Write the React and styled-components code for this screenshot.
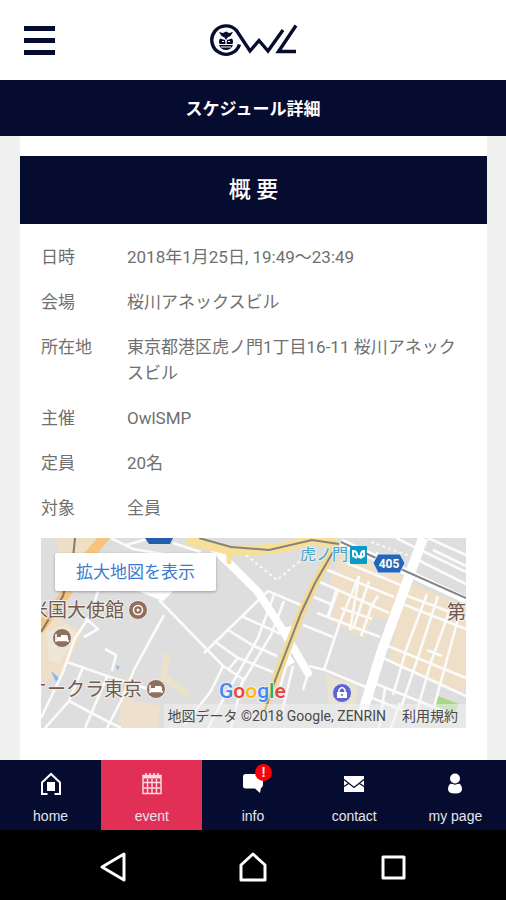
import React from 'react';
import styled, { createGlobalStyle, ThemeProvider } from 'styled-components';

const theme = {
    bg: {
        page: '#f0f0f1',
        box: '#ffffff',
        navy: '#060b30',
        active: '#e22f56',
        black: '#000000'
    },
    color: {
        text: '#707070',
        white: '#ffffff',
        link: '#3a7bd0'
    },
    font: 'Roboto, "Noto Sans CJK JP", sans-serif'
};

const GlobalStyle = createGlobalStyle`
    * {
        box-sizing: border-box;
    }

    body {
        margin: 0;
        font-family: ${theme.font};
        background-color: ${theme.bg.page};
    }

    button {
        padding: 0;
        border: 0;
        background: none;
        cursor: pointer;
    }

    svg {
        display: block;
    }
`;

const Screen = styled.div`
    display: flex;
    flex-direction: column;
    min-height: 100vh;
`;

const Header = styled.header`
    display: grid;
    grid-template-columns: 1fr auto 1fr;
    align-items: center;
    height: 80px;
    padding: 0 24px;
    background-color: ${({ theme }) => theme.bg.box};
`;

const MenuButton = styled.button`
    display: flex;
    flex-direction: column;
    gap: 7px;
    width: 31px;
`;

const MenuBar = styled.span`
    height: 5px;
    background-color: ${({ theme }) => theme.bg.navy};
`;

const TitleBar = styled.h1`
    margin: 0;
    padding-top: 2px;
    font-size: 17px;
    line-height: 54px;
    font-weight: 700;
    text-align: center;
    color: ${({ theme }) => theme.color.white};
    background-color: ${({ theme }) => theme.bg.navy};
`;

const Main = styled.main`
    display: flex;
    flex: 1;
    padding: 0 19px 0 20px;
`;

const Card = styled.section`
    flex: 1;
    min-width: 0;
    padding: 20px 0 32px;
    background-color: ${({ theme }) => theme.bg.box};
`;

const CardTitle = styled.h2`
    margin: 0;
    font-size: 22px;
    line-height: 68px;
    font-weight: 500;
    text-align: center;
    color: ${({ theme }) => theme.color.white};
    background-color: ${({ theme }) => theme.bg.navy};
`;

const Details = styled.dl`
    display: grid;
    grid-template-columns: 86px 1fr;
    row-gap: 19px;
    margin: 0;
    padding: 20px 21px 17px;
    font-size: 17px;
    line-height: 26px;
    color: ${({ theme }) => theme.color.text};
`;

const Term = styled.dt`
    margin: 0;
`;

const Value = styled.dd`
    margin: 0;
`;

const MapBox = styled.div`
    position: relative;
    height: 190px;
    margin: 0 21px;
    overflow: hidden;
    background-color: #dedede;

    > svg {
        width: 100%;
        height: 100%;
    }
`;

const MapLink = styled.a`
    position: absolute;
    top: 15px;
    left: 14px;
    padding: 0 21px;
    font-size: 17px;
    line-height: 38px;
    text-decoration: none;
    color: ${({ theme }) => theme.color.link};
    background-color: ${({ theme }) => theme.bg.box};
    border-radius: 2px;
    box-shadow: 0 1px 3px rgba(0, 0, 0, 0.3);
`;

const Attribution = styled.div`
    position: absolute;
    right: 0;
    bottom: 0;
    display: flex;
    gap: 16px;
    padding: 0 8px 0 3px;
    font-size: 14px;
    line-height: 24px;
    white-space: nowrap;
    color: #4a4a4a;
    background-color: rgba(240, 240, 240, 0.55);
`;

const TermsLink = styled.a`
    text-decoration: none;
    color: inherit;
`;

const TabBar = styled.nav`
    display: grid;
    grid-template-columns: repeat(5, 1fr);
    height: 70px;
    background-color: ${({ theme }) => theme.bg.navy};
`;

const Tab = styled.a`
    display: flex;
    flex-direction: column;
    align-items: center;
    gap: 12px;
    padding-top: 12px;
    font-family: "Liberation Sans", sans-serif;
    font-size: 14px;
    line-height: 16px;
    text-decoration: none;
    color: #e4e5ec;
    background-color: ${({ theme, $active }) => $active ? theme.bg.active : 'transparent'};
`;

const TabIcon = styled.span`
    position: relative;
`;

const Badge = styled.span`
    position: absolute;
    top: -8px;
    right: -7px;
    width: 17px;
    height: 17px;
    border-radius: 50%;
    font-size: 14px;
    line-height: 17px;
    font-weight: 700;
    text-align: center;
    background-color: #fa0008;
`;

const SystemBar = styled.div`
    display: flex;
    justify-content: center;
    align-items: center;
    gap: 108px;
    height: 70px;
    padding-top: 4px;
    background-color: ${({ theme }) => theme.bg.black};
`;

const Logo = () => (
    <svg width="90" height="40" viewBox="0 0 90 40" fill="none" stroke="#060b30" strokeWidth="3.4" role="img" aria-label="OWL">
        <path d="M31.5 24.5A14.2 14.2 0 1 1 28.5 10.500L42 31L51 20.500L60 31L75 10" />
        <path d="M88 5.500L70.500 31.500H88" />
        <g fill="#060b30" stroke="none">
            <path d="M11 12L15 13L18 11.5L21 13L25 12L22.5 16L19.5 17.5L18 20L16.500 17.500L13.500 16Z" />
            <path d="M12 18.500L17 20L17.500 24H11.500C10.500 22 11 20 12 18.500ZM24 18.500L19 20L18.500 24H24.500C25.500 22 25 20 24 18.500Z" />
            <path d="M11 25H25C24 28 21 30 18 30S12 28 11 25Z" />
        </g>
        <path d="M14 21.500H16M20 21.500H22M13 27H23" stroke="#fff" strokeWidth="1" />
    </svg>
);

const HomeIcon = () => (
    <svg width="24" height="24" viewBox="0 0 24 24" fill="none" stroke="#fff" strokeWidth="2">
        <path d="M8.500 22H3V10.500L12 2L21 10.500V22H15.500" />
        <path d="M8 10H16V19H8Z" fill="#fff" stroke="none" />
    </svg>
);

const EventIcon = () => (
    <svg width="24" height="24" viewBox="0 0 24 24" fill="none" stroke="#ffd9e2">
        <path d="M3 3.500H21V21.500H3Z" strokeWidth="1.500" />
        <path d="M3 5H21" strokeWidth="3" />
        <path d="M6 1V6M10 1V6M14 1V6M18 1V6" strokeWidth="1.500" />
        <path d="M3 10.500H21M3 16H21M7.500 7V21M12 7V21M16.500 7V21" strokeWidth="1.400" />
    </svg>
);

const InfoIcon = () => (
    <svg width="24" height="24" viewBox="0 0 24 24" fill="#fff">
        <path d="M4.500 2H19Q22 2 22 5V13Q22 15 20 16L19 21L14 16.500H4.500Q2 16.500 2 14V5Q2 2 4.500 2Z" />
    </svg>
);

const ContactIcon = () => (
    <svg width="24" height="24" viewBox="0 0 24 24">
        <path d="M2 4H22V20H2Z" fill="#fff" />
        <path d="M2 7.500L12 15.500L22 7.500M2 14.500L6.500 11.500M22 14.500L17.500 11.500" fill="none" stroke="#060b30" strokeWidth="1.300" />
    </svg>
);

const PersonIcon = () => (
    <svg width="24" height="24" viewBox="0 0 24 24" fill="#fff">
        <circle cx="12" cy="6.500" r="5" />
        <path d="M8 11.500H16Q19 13 19 17Q19 21.500 12 21.500T5 17Q5 13 8 11.500Z" />
        <path d="M8 11Q12 13.500 16 11" fill="none" stroke="#060b30" strokeWidth="1" />
    </svg>
);

const HotelPin = ({ x, y }) => (
    <g transform={`translate(${x} ${y})`}>
        <circle r="9.500" fill="#90705c" stroke="#f3eee9" strokeWidth="1" />
        <path d="M-6 -4V4M-6 2.500H6V4" stroke="#fff" strokeWidth="1.500" fill="none" />
        <path d="M-5 -1H-1V-3H4Q6 -3 6 0V2H-5Z" fill="#fff" />
    </g>
);

const StreetMap = () => (
    <svg viewBox="0 0 425 190" preserveAspectRatio="xMinYMid slice" fontFamily={theme.font}>
        <rect width="425" height="190" fill="#dedede" />

        {/* built-up blocks */}
        <g fill="#efdfc6">
            <path d="M15 0H60L48 16H17Z" />
            <path d="M0 90L14 78L42 94L22 134L0 148Z" />
            <path d="M82 160L119 168L117 190H76Z" fill="#eee0cd" />
            <path d="M300 12L362 38L350 82L333 79L324 101L290 83L297 55L288 44Z" />
            <path d="M366 44L425 68V155L347 124Z" />
            <path d="M284 135L291 140L317 147L314 170L288 166Z" fill="#ebe3d2" />
        </g>
        <path d="M333 79L345 84L339 100L324 96Z" fill="#dedede" />
        <path d="M6 94L24 86L36 96L18 126L8 122Z" fill="#eee5db" />
        <path d="M397 158L418 166L413 178L392 172Z" fill="#a7d987" />
        <path d="M10 133L18 140L15 144ZM75 127L79 129L76 132Z" fill="#8bb9ec" />
        <path d="M126 116L123 139L106 154M123 139L147 157" fill="none" stroke="#ece3c6" strokeWidth="6" />

        {/* side streets */}
        <g fill="none" stroke="#fbfbfb" strokeWidth="2.6">
            <path d="M118 62L182 128L202 141M123 77L107 106L93 132L80 163L66 190M163 115L227 53M187 92L213 108L236 118M200 78L240 96M173 103L197 120L232 134M233 57L217 100L183 160L167 190M243 63L230 97L200 147M182 128L170 153L143 187M202 141L190 190M197 120L187 132" />
            <path d="M70 0L92 11L146 20M85 7L110 0M132 5L160 14M57 53L49 78L34 100L22 134L0 180M26 124L69 139L89 145M43 99L57 91L44 80M64 111L75 117L71 133M42 129L28 163L4 190M28 163L62 181L80 190M66 139L44 190M95 147L119 155" />
            <path d="M227 53L262 68M276 75L339 99M262 87L292 99M250 111L236 160M252 128L241 174M268 128L284 132L325 149M283 132L299 84L318 38M268 132L262 152M279 44L297 52M273 59L292 67M297 52L287 80" />
            <path d="M284 31L353 59M297 52L348 75M300 70L331 81M296 50L287 78M318 38L309 92M328 43L322 61L312 91M337 58L331 67L320 98M306 25L362 48" />
            <path d="M359 65L425 91M347 108L425 140M342 120L425 158M333 145L405 174M329 159L380 180M386 56L366 109L352 157M397 58L378 116L359 173M411 66L390 124L374 180M419 74L402 136L390 180M364 57L425 80M386 112L401 118M344 150L338 190M359 165L350 190" />
            <path d="M355 0L425 34M377 22L425 46M387 0L425 17M392 12L425 28M335 15L353 24" />
        </g>
        <path d="M205 17L236 42L270 14M330 4L369 18M388 0L377 20" fill="none" stroke="#f8f8f8" strokeWidth="2" strokeDasharray="3 3" />

        {/* avenues */}
        <path d="M92 50L122 62L132 52Z" fill="#fff" stroke="#fff" strokeWidth="2" />
        <path d="M174 12L188 25L217 54L243 94L267 135" fill="none" stroke="#fff" strokeWidth="8" strokeLinecap="round" />
        <path d="M254 124L244 130L248 116ZM240 90L252 88L248 102Z" fill="#fff" />
        <path d="M382 0L362 55L340 115L320 180" fill="none" stroke="#fff" strokeWidth="10" />
        <path d="M300 4L335 20L425 62" fill="none" stroke="#fff" strokeWidth="7" />
        <path d="M300 4L335 20L425 60" fill="none" stroke="#858585" strokeWidth="2" />
        <path d="M146 2L188 12L215 12L239 10L271 2L295 5" fill="none" stroke="#f8df98" strokeWidth="10" />
        <path d="M188 12V26" stroke="#f8df98" strokeWidth="5" />
        <path d="M296 4L287 22L274 45L260 75L235 140L222 176" fill="none" stroke="#f4da91" strokeWidth="8" />
        <path d="M158 0L190 9L228 12L271 2L298 6M292 14L274 45L260 75L235 140L224 172" fill="none" stroke="#85837a" strokeWidth="2" />
        <path d="M66 -4L46 20L24 57L-2 92" fill="none" stroke="#f6c47b" strokeWidth="10" />
        <path d="M34 0L32 20L22 58L0 94" fill="none" stroke="#817a70" strokeWidth="2" />

        {/* road shields */}
        <path d="M104 0H132L129 6H108Z" fill="#245fae" />
        <path d="M337 16H359L364 25L359 35H337L332 25Z" fill="#2765b6" stroke="#dce8f4" strokeWidth="1" />
        <text x="348" y="30" fontSize="12" fontWeight="700" textAnchor="middle" fill="#fff">405</text>

        {/* places */}
        <g stroke="#eeeeee" strokeWidth="2" paintOrder="stroke" strokeLinejoin="round">
            <text x="307" y="22" fontSize="16" textAnchor="end" fill="#4ba3c7">虎ノ門</text>
            <g fontSize="19" fill="#75594b">
                <text x="83" y="79" textAnchor="end">米国大使館</text>
                <text x="101" y="158" textAnchor="end">オークラ東京</text>
                <text x="406" y="81">第</text>
            </g>
            <text x="178" y="160" fontSize="21" fontWeight="500">
                <tspan fill="#4285f4">G</tspan>
                <tspan fill="#ea4335">o</tspan>
                <tspan fill="#fbbc05">o</tspan>
                <tspan fill="#4285f4">g</tspan>
                <tspan fill="#34a853">l</tspan>
                <tspan fill="#ea4335">e</tspan>
            </text>
        </g>
        <rect x="309" y="8" width="17" height="18" rx="1" fill="#079bc5" />
        <path d="M316 20L312 18V13Q316 13 316 17L318 19L320 17Q320 13 323 13V18L319 20" fill="none" stroke="#fff" strokeWidth="2" />
        <circle cx="97" cy="72" r="9.500" fill="#90705c" stroke="#f3eee9" strokeWidth="1" />
        <circle cx="97" cy="72" r="4.500" fill="none" stroke="#fff" strokeWidth="1.500" />
        <circle cx="97" cy="72" r="1.500" fill="#fff" />
        <HotelPin x={21} y={100} />
        <HotelPin x={115} y={151} />
        <circle cx="301" cy="155" r="9.500" fill="#5e64cf" stroke="#e6e6f7" strokeWidth="1" />
        <path d="M296 154H306V160H296Z" fill="#fff" />
        <path d="M298 154V152Q301 147 304 152V154" fill="none" stroke="#fff" strokeWidth="1.500" />
        <circle cx="301" cy="157" r="1" fill="#5e64cf" />
    </svg>
);

const details = [
    { term: '日時', value: '2018年1月25日, 19:49〜23:49' },
    { term: '会場', value: '桜川アネックスビル' },
    { term: '所在地', value: '東京都港区虎ノ門1丁目16-11 桜川アネックスビル' },
    { term: '主催', value: 'OwlSMP' },
    { term: '定員', value: '20名' },
    { term: '対象', value: '全員' }
];

const tabs = [
    { name: 'home', icon: HomeIcon },
    { name: 'event', icon: EventIcon, active: true },
    { name: 'info', icon: InfoIcon, badge: '!' },
    { name: 'contact', icon: ContactIcon },
    { name: 'my page', icon: PersonIcon }
];

const App = () => {
    const detailItems = details.map(({ term, value }) => (
        <React.Fragment key={term}>
            <Term>{term}</Term>
            <Value>{value}</Value>
        </React.Fragment>
    ));

    const tabItems = tabs.map(({ name, icon: Icon, active, badge }) => (
        <Tab key={name} href="#" $active={active}>
            <TabIcon>
                <Icon />
                {badge && <Badge>{badge}</Badge>}
            </TabIcon>
            {name}
        </Tab>
    ));

    return (
        <ThemeProvider theme={theme}>
            <GlobalStyle />
            <Screen>
                <Header>
                    <MenuButton aria-label="menu">
                        <MenuBar />
                        <MenuBar />
                        <MenuBar />
                    </MenuButton>
                    <Logo />
                </Header>
                <TitleBar>スケジュール詳細</TitleBar>
                <Main>
                    <Card>
                        <CardTitle>概 要</CardTitle>
                        <Details>{detailItems}</Details>
                        <MapBox>
                            <StreetMap />
                            <MapLink href="#">拡大地図を表示</MapLink>
                            <Attribution>
                                <span>地図データ ©2018 Google, ZENRIN</span>
                                <TermsLink href="#">利用規約</TermsLink>
                            </Attribution>
                        </MapBox>
                    </Card>
                </Main>
                <TabBar>{tabItems}</TabBar>
                <SystemBar>
                    <button aria-label="back">
                        <svg width="32" height="32" viewBox="0 0 32 32" fill="none" stroke="#fff" strokeWidth="3" strokeLinejoin="round">
                            <path d="M27 3V29L5 16Z" />
                        </svg>
                    </button>
                    <button aria-label="home screen">
                        <svg width="32" height="32" viewBox="0 0 32 32" fill="none" stroke="#fff" strokeWidth="3" strokeLinejoin="round">
                            <path d="M4 29V14L16 3L28 14V29Z" />
                        </svg>
                    </button>
                    <button aria-label="recent apps">
                        <svg width="32" height="32" viewBox="0 0 32 32" fill="none" stroke="#fff" strokeWidth="3" strokeLinejoin="round">
                            <path d="M6 6H27V27H6Z" />
                        </svg>
                    </button>
                </SystemBar>
            </Screen>
        </ThemeProvider>
    );
};

export default App;
